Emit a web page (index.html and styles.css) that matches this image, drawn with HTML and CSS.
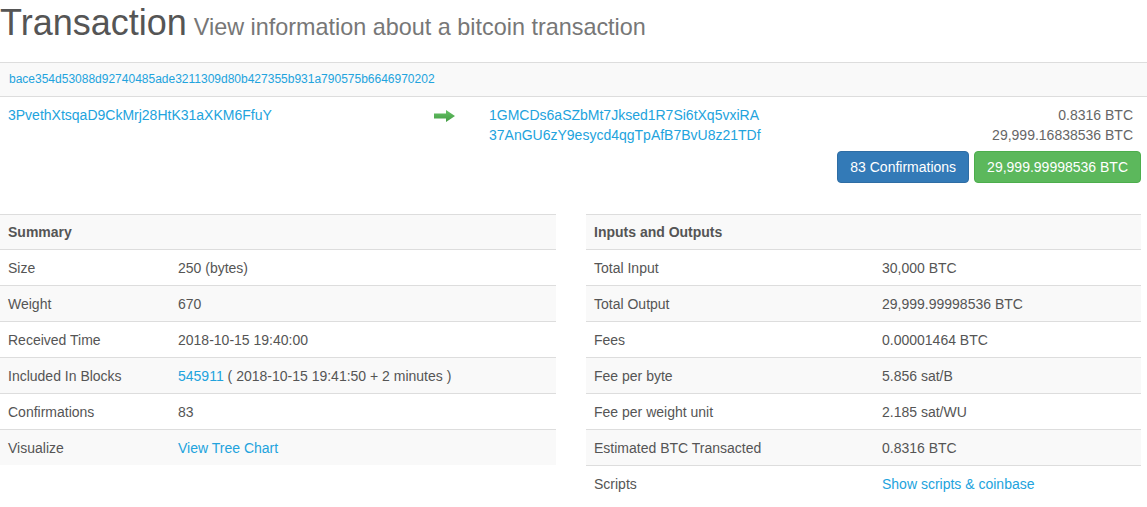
FILE: index.html
```html
<!DOCTYPE html>
<html>
<head>
<meta charset="utf-8">
<title>Transaction</title>
<link rel="stylesheet" href="styles.css">
</head>
<body>
<h1 class="page-title">Transaction <small class="subtitle">View information about a bitcoin transaction</small></h1>

<div class="tx-box">
  <div class="tx-hash"><a href="#">bace354d53088d92740485ade3211309d80b427355b931a790575b6646970202</a></div>
  <div class="tx-io">
    <div class="tx-inputs"><a href="#">3PvethXtsqaD9CkMrj28HtK31aXKM6FfuY</a></div>
    <div class="tx-arrow">
      <svg width="21" height="12" viewBox="0 0 21 12">
        <defs>
          <linearGradient id="ag" x1="0" y1="0" x2="0" y2="1">
            <stop offset="0" stop-color="#66c266"/>
            <stop offset="1" stop-color="#449d44"/>
          </linearGradient>
        </defs>
        <path d="M0 3.5 H12 V0 L21 6 L12 12 V8.5 H0 Z" fill="url(#ag)"/>
      </svg>
    </div>
    <div class="tx-outputs">
      <div class="out-row"><a href="#">1GMCDs6aSZbMt7Jksed1R7Si6tXq5vxiRA</a><span class="amount">0.8316 BTC</span></div>
      <div class="out-row"><a href="#">37AnGU6zY9esycd4qgTpAfB7BvU8z21TDf</a><span class="amount">29,999.16838536 BTC</span></div>
    </div>
  </div>
  <div class="tx-buttons">
    <span class="btn btn-primary">83 Confirmations</span>
    <span class="btn btn-success">29,999.99998536 BTC</span>
  </div>
</div>

<div class="tables">
  <div class="col">
    <table class="info summary">
      <colgroup><col class="c-label"><col></colgroup>
      <tr class="head"><th colspan="2">Summary</th></tr>
      <tr><td>Size</td><td>250 (bytes)</td></tr>
      <tr class="alt"><td>Weight</td><td>670</td></tr>
      <tr><td>Received Time</td><td>2018-10-15 19:40:00</td></tr>
      <tr class="alt"><td>Included In Blocks</td><td><a href="#">545911</a> ( 2018-10-15 19:41:50 + 2 minutes )</td></tr>
      <tr><td>Confirmations</td><td>83</td></tr>
      <tr class="alt"><td>Visualize</td><td><a href="#">View Tree Chart</a></td></tr>
    </table>
  </div>
  <div class="col">
    <table class="info io-table">
      <colgroup><col class="c-label"><col></colgroup>
      <tr class="head"><th colspan="2">Inputs and Outputs</th></tr>
      <tr><td>Total Input</td><td>30,000 BTC</td></tr>
      <tr class="alt"><td>Total Output</td><td>29,999.99998536 BTC</td></tr>
      <tr><td>Fees</td><td>0.00001464 BTC</td></tr>
      <tr class="alt"><td>Fee per byte</td><td>5.856 sat/B</td></tr>
      <tr><td>Fee per weight unit</td><td>2.185 sat/WU</td></tr>
      <tr class="alt"><td>Estimated BTC Transacted</td><td>0.8316 BTC</td></tr>
      <tr><td>Scripts</td><td><a href="#">Show scripts &amp; coinbase</a></td></tr>
    </table>
  </div>
</div>
</body>
</html>
```

FILE: styles.css
```css
html, body {
  margin: 0;
  padding: 0;
  background: #fff;
}
body {
  font-family: "Liberation Sans", Arial, Helvetica, sans-serif;
  font-size: 14px;
  line-height: 20px;
  color: #555;
}
a {
  color: #22a3dd;
  text-decoration: none;
}
.page-title {
  margin: 3px 0 19px 0;
  font-size: 36px;
  line-height: 40px;
  height: 40px;
  font-weight: 500;
  color: #555;
  word-spacing: -3px;
}
.subtitle {
  font-size: 23.4px;
  line-height: 1;
  color: #777;
  font-weight: 400;
  word-spacing: 0;
}
.tx-box {
  width: 100%;
}
.tx-hash {
  border-top: 1px solid #ddd;
  border-bottom: 1px solid #ddd;
  background: #f9f9f9;
  padding: 8px 8px 8px 9px;
  font-size: 12px;
  line-height: 17px;
}
.tx-io {
  display: flex;
  padding: 8px 14px 0 8px;
}
.tx-inputs {
  width: 426px;
}
.tx-arrow {
  width: 55px;
  padding-top: 5px;
  line-height: 0;
}
.tx-outputs {
  flex: 1;
}
.out-row {
  display: flex;
  justify-content: space-between;
}
.amount {
  color: #666;
}
.tx-buttons {
  display: flex;
  justify-content: flex-end;
  gap: 5px;
  margin: 6px 6px 0 0;
}
.btn {
  display: inline-block;
  padding: 5px 12px;
  border: 1px solid transparent;
  border-radius: 4px;
  color: #fff;
  font-size: 14px;
  line-height: 20px;
}
.btn-primary {
  background: #337ab7;
  border-color: #2e6da4;
}
.btn-success {
  background: #5cb85c;
  border-color: #4cae4c;
}
.tables {
  display: flex;
  gap: 30px;
  margin-top: 31px;
  align-items: flex-start;
}
.col {
  flex: none;
  width: 556px;
}
.col + .col {
  width: 555px;
}
.info {
  width: 100%;
  table-layout: fixed;
  border-collapse: collapse;
  border-spacing: 0;
}
.info th, .info td {
  padding: 9px 8px 7px 8px;
  line-height: 19px;
  text-align: left;
  border-top: 1px solid #ddd;
  vertical-align: top;
  white-space: nowrap;
}
.info th {
  font-weight: bold;
  border-bottom: 1px solid #ddd;
  padding: 8px 8px 7px 8px;
}
.info .head {
  background: #f9f9f9;
}
.info .alt {
  background: #f9f9f9;
}
.summary .c-label {
  width: 170px;
}
.io-table .c-label {
  width: 288px;
}
```
